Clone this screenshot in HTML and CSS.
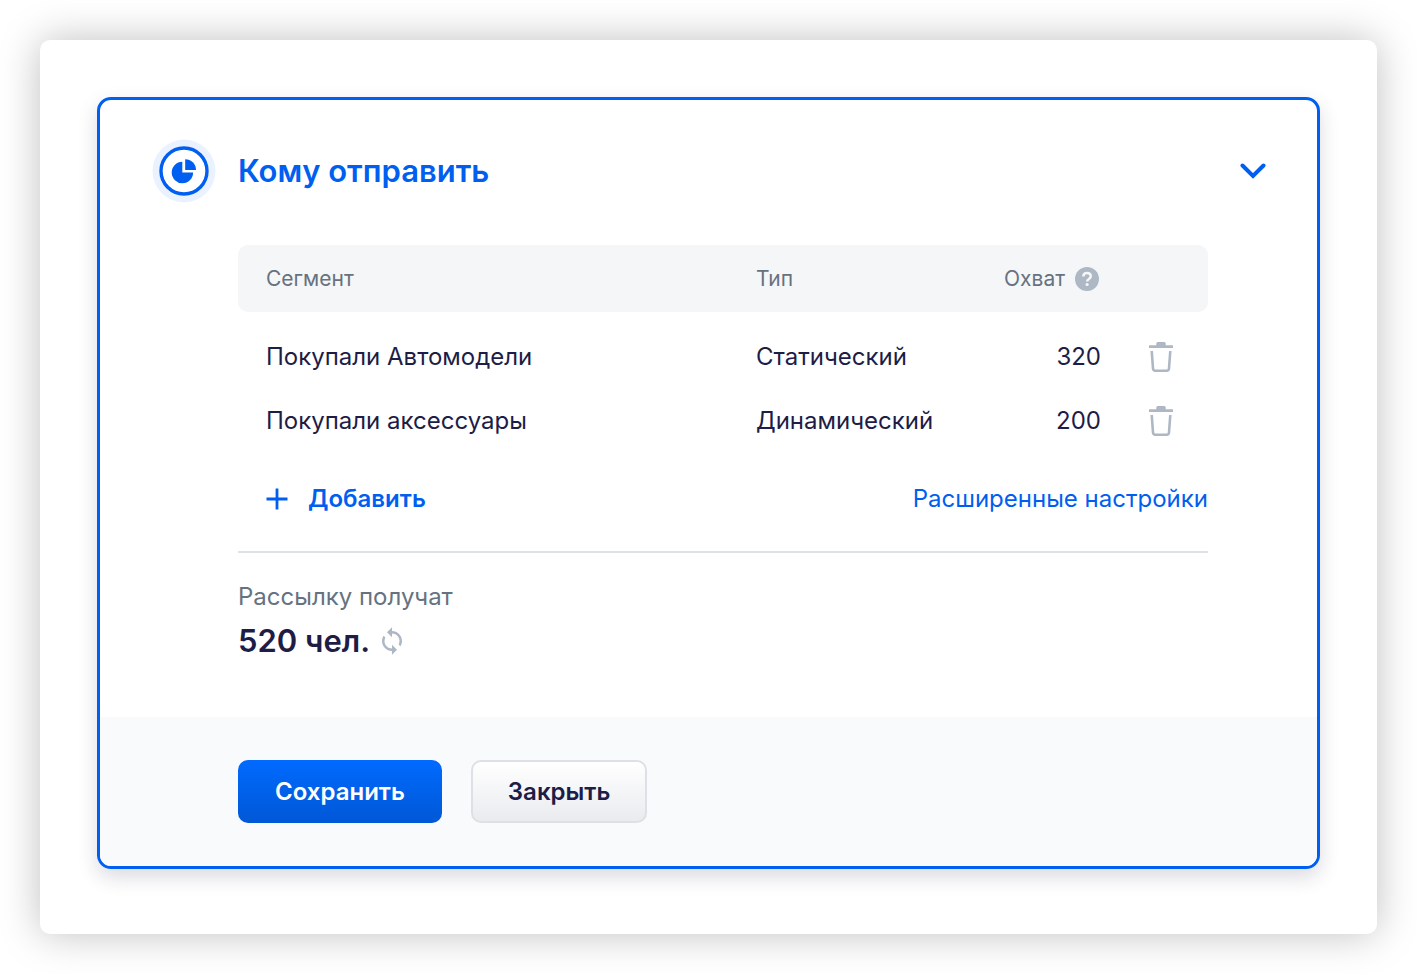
FILE: index.html
```html
<!DOCTYPE html>
<html lang="ru">
<head>
<meta charset="utf-8">
<meta name="viewport" content="width=device-width, initial-scale=1">
<title>Кому отправить</title>
<link rel="stylesheet" href="styles.css">
</head>
<body>
<main class="sheet">
  <section class="card">
    <header class="card-header">
      <svg class="badge" viewBox="0 0 64 64" aria-hidden="true">
        <circle cx="32" cy="32" r="31.5" fill="#ebf2ff"/>
        <circle cx="32" cy="32" r="23" fill="#fff" stroke="#005ff0" stroke-width="3.4"/>
        <path d="M30.3 22.8v10.600h10.800a10.700 10.700 0 1 1-10.800-10.600z" fill="#005ff0"/>
        <path d="M33.2 20.2a10.800 10.800 0 0 1 10.800 10.800H33.200z" fill="#005ff0"/>
      </svg>
      <h1 class="title">Кому отправить</h1>
      <button class="icon-button" type="button" aria-label="Свернуть">
        <svg class="chevron" viewBox="0 0 26 16" aria-hidden="true"><path d="M2.500 2.500 13 13 23.500 2.500" fill="none" stroke="#005ff0" stroke-width="4" stroke-linecap="round" stroke-linejoin="miter"/></svg>
      </button>
    </header>

    <div class="card-body">
      <table class="segments">
        <thead>
          <tr>
            <th class="col-name" scope="col">Сегмент</th>
            <th class="col-type" scope="col">Тип</th>
            <th class="col-reach" scope="col">
              <span class="reach-label">Охват
                <svg class="help" viewBox="0 0 24 24" aria-hidden="true"><circle cx="12" cy="12" r="12" fill="#adb8c4"/><path d="M8.300 9.600C8.300 7.300 9.900 6 12 6s3.800 1.300 3.800 3.300c0 2.600-3.700 2.600-3.700 5.200" fill="none" stroke="#f4f6f8" stroke-width="2.500"/><circle cx="12.100" cy="17.500" r="1.600" fill="#f4f6f8"/></svg>
              </span>
            </th>
            <td class="col-action"></td>
          </tr>
        </thead>
        <tbody>
          <tr>
            <td>Покупали Автомодели</td>
            <td>Статический</td>
            <td class="number">320</td>
            <td class="action"><button class="icon-button" type="button" aria-label="Удалить">
              <svg class="trash" viewBox="0 0 24 30" aria-hidden="true"><path d="M0 3.200h7.300V1.500Q7.300 0 8.800 0h6.400q1.500 0 1.500 1.500v1.700H24V6H0z" fill="#adb8c4"/><path d="M2.700 9 4 26.500Q4.200 28.700 6.200 28.700H17.800Q19.800 28.700 20 26.500L21.300 9" fill="none" stroke="#adb8c4" stroke-width="2.600"/></svg>
            </button></td>
          </tr>
          <tr>
            <td>Покупали аксессуары</td>
            <td>Динамический</td>
            <td class="number">200</td>
            <td class="action"><button class="icon-button" type="button" aria-label="Удалить">
              <svg class="trash" viewBox="0 0 24 30" aria-hidden="true"><path d="M0 3.200h7.300V1.500Q7.300 0 8.800 0h6.400q1.500 0 1.500 1.500v1.700H24V6H0z" fill="#adb8c4"/><path d="M2.700 9 4 26.500Q4.200 28.700 6.200 28.700H17.800Q19.800 28.700 20 26.500L21.300 9" fill="none" stroke="#adb8c4" stroke-width="2.600"/></svg>
            </button></td>
          </tr>
        </tbody>
      </table>

      <div class="links">
        <button class="add" type="button">
          <svg class="plus" viewBox="0 0 22 22" aria-hidden="true"><path d="M11 .5v21M.5 11h21" fill="none" stroke="#005ff0" stroke-width="2.800"/></svg>
          Добавить
        </button>
        <a class="advanced" href="#">Расширенные настройки</a>
      </div>

      <div class="summary">
        <p class="summary-label">Рассылку получат</p>
        <p class="summary-value">520 чел.
          <button class="icon-button" type="button" aria-label="Обновить">
            <svg class="refresh" viewBox="4 1 16 22" aria-hidden="true"><path d="M12 4V1L8 5l4 4V6c3.310 0 6 2.690 6 6 0 1.010-.25 1.970-.7 2.800l1.460 1.460C19.540 15.030 20 13.570 20 12c0-4.420-3.580-8-8-8zm0 14c-3.310 0-6-2.690-6-6 0-1.010.25-1.970.7-2.800L5.240 7.740C4.460 8.970 4 10.430 4 12c0 4.420 3.580 8 8 8v3l4-4-4-4v3z" fill="#adb8c4"/></svg>
          </button>
        </p>
      </div>
    </div>

    <footer class="card-footer">
      <button class="button primary" type="button">Сохранить</button>
      <button class="button secondary" type="button">Закрыть</button>
    </footer>
  </section>
</main>
</body>
</html>
```
FILE: styles.css
```css
* {
  box-sizing: border-box;
}

body {
  margin: 0;
  padding: 40px;
  background: #fff;
  color: #1d1d47;
  font-family: Inter, "Liberation Sans", sans-serif;
  font-size: 24px;
  line-height: 32px;
}

button {
  font: inherit;
  cursor: pointer;
}

.sheet {
  padding: 57px 57px 65px;
  border-radius: 10px;
  background: #fff;
  box-shadow: 0 0 40px rgba(0, 0, 0, 0.25);
}

.card {
  overflow: hidden;
  border: 3px solid #005ff0;
  border-radius: 14px;
  box-shadow: 0 8px 20px rgba(29, 29, 71, 0.16);
}

.card-header {
  display: flex;
  align-items: center;
  gap: 22px;
  padding: 39px 51px 42px 52px;
}

.badge {
  width: 64px;
  height: 64px;
}

.title {
  flex: 1;
  margin: 0;
  color: #005ff0;
  font-size: 31px;
  font-weight: 600;
  line-height: 40px;
}

.icon-button {
  display: inline-flex;
  padding: 0;
  border: 0;
  background: none;
}

.chevron {
  width: 26px;
  height: 16px;
}

.card-body {
  padding: 0 109px 56px 138px;
}

.segments {
  width: 100%;
  border-spacing: 0;
  table-layout: fixed;
}

.segments th,
.segments td {
  height: 64px;
  padding: 0;
  text-align: left;
}

.segments thead th,
.segments thead td {
  height: 67px;
  background: #f4f6f8;
  color: #66727f;
  font-size: 21px;
  font-weight: 400;
}

.segments thead th:first-child {
  border-radius: 10px 0 0 10px;
}

.segments thead td:last-child {
  border-radius: 0 10px 10px 0;
}

.segments th:first-child,
.segments td:first-child {
  padding-left: 28px;
}

.segments tbody::before {
  content: "";
  display: table-row;
  height: 13px;
}

.col-type {
  width: 225px;
}

.col-reach {
  width: 120px;
}

.col-action {
  width: 107px;
}

.reach-label {
  display: flex;
  align-items: center;
  justify-content: flex-end;
  gap: 10px;
  padding-right: 2px;
}

.help {
  width: 24px;
  height: 24px;
}

.segments .number {
  text-align: right;
}

.segments .action {
  padding-left: 48px;
  vertical-align: middle;
}

.action .icon-button {
  display: flex;
}

.trash {
  width: 24px;
  height: 30px;
}

.links {
  display: flex;
  align-items: center;
  justify-content: space-between;
  padding: 30px 0 36px 28px;
  border-bottom: 2px solid #dde2e8;
}

.add {
  display: flex;
  align-items: center;
  gap: 20px;
  padding: 0;
  border: 0;
  background: none;
  color: #005ff0;
  font-weight: 600;
}

.plus {
  width: 22px;
  height: 22px;
}

.advanced {
  color: #005ff0;
  text-decoration: none;
}

.summary {
  padding-top: 28px;
}

.summary p {
  margin: 0;
}

.summary-label {
  color: #66727f;
}

.summary .summary-value {
  display: flex;
  align-items: center;
  gap: 12px;
  margin-top: 8px;
  font-size: 31px;
  font-weight: 600;
  line-height: 40px;
}

.refresh {
  width: 20px;
  height: 28px;
}

.card-footer {
  display: flex;
  gap: 29px;
  padding: 43px 138px;
  background: #f9fafc;
}

.button {
  height: 63px;
  padding: 0 37px;
  border: 0;
  border-radius: 10px;
  font-weight: 600;
}

.primary {
  background: linear-gradient(#006aff, #0058d6);
  color: #fff;
}

.secondary {
  padding: 0 35px;
  border: 2px solid #dde0e5;
  background: linear-gradient(#fff, #e9ebee);
  color: #1d1d47;
}
```
